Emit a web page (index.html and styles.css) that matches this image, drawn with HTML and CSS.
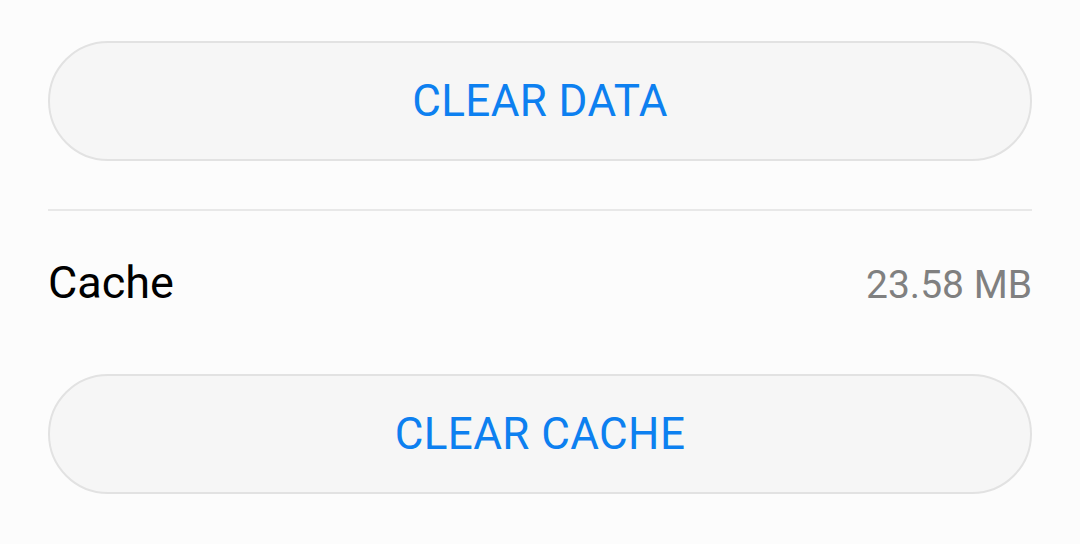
FILE: index.html
```html
<!DOCTYPE html>
<html lang="en">
<head>
    <meta charset="UTF-8" />
    <meta name="viewport" content="width=device-width, initial-scale=1" />
    <title>Storage</title>
    <link rel="stylesheet" href="styles.css">
</head>
<body>
    <div class="container">
        <button class="btn-pill">CLEAR DATA</button>
        <div class="divider"></div>
        <div class="row">
            <span class="label">Cache</span>
            <span class="value">23.58 MB</span>
        </div>
        <button class="btn-pill">CLEAR CACHE</button>
    </div>
</body>
</html>
```

FILE: styles.css
```css
body {
    font-family: Roboto, 'Noto Sans', sans-serif;
    background: #fcfcfc;
    margin: 0;
    color: #000;
}
.container {
    padding: 41px 48px 0 48px;
    display: flex;
    flex-direction: column;
}
.btn-pill {
    height: 120px;
    width: 100%;
    background: #f6f6f6;
    border: 2px solid #e2e2e2;
    border-radius: 60px;
    font-family: Roboto, 'Noto Sans', sans-serif;
    font-size: 44px;
    color: #0d80f0;
    letter-spacing: 0.4px;
    padding: 0;
    cursor: pointer;
}
.divider {
    height: 2px;
    background: #e8e8e8;
    margin-top: 48px;
}
.row {
    display: flex;
    justify-content: space-between;
    align-items: baseline;
    line-height: 53px;
    padding: 45px 0 62px 0;
}
.label {
    font-size: 45px;
}
.value {
    font-size: 39px;
    color: #808080;
}
```
